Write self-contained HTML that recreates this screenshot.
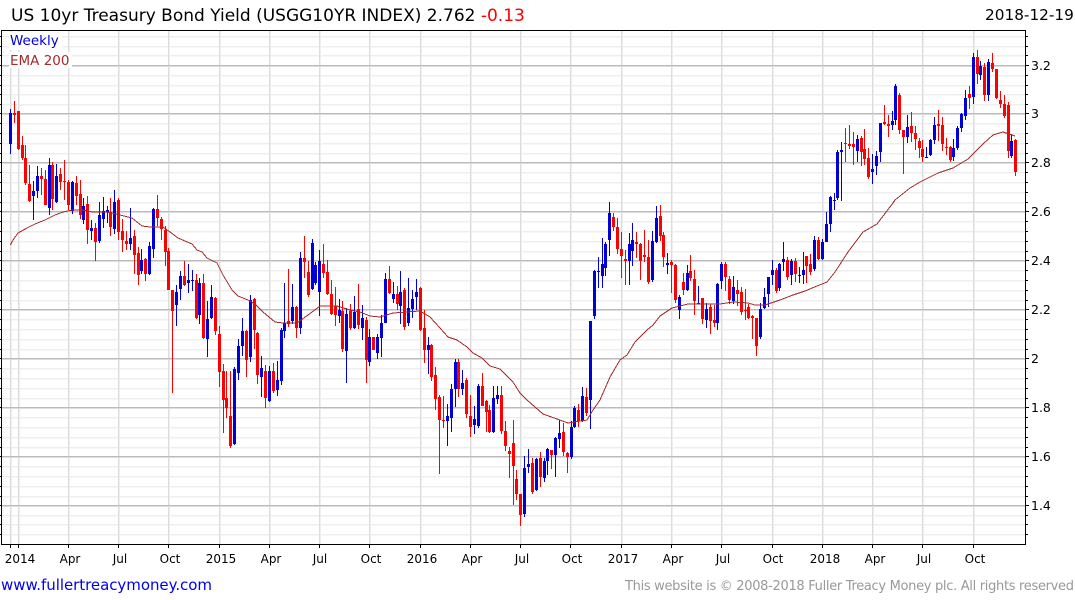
<!DOCTYPE html>
<html><head><meta charset="utf-8"><title>US 10yr Treasury Bond Yield</title>
<style>html,body{margin:0;padding:0;background:#fff;width:1075px;height:600px;overflow:hidden}svg{display:block}text{font-family:"DejaVu Sans",sans-serif}</style></head>
<body>
<svg width="1075" height="600" viewBox="0 0 1075 600" xmlns="http://www.w3.org/2000/svg">
<g shape-rendering="crispEdges" fill="none">
<path transform="translate(0,1)" stroke="#f7f7f7" d="M2 36.5H1025M2 46.5H1025M2 55.5H1025M2 75.5H1025M2 85.5H1025M2 94.5H1025M2 104.5H1025M2 123.5H1025M2 133.5H1025M2 143.5H1025M2 153.5H1025M2 172.5H1025M2 182.5H1025M2 192.5H1025M2 202.5H1025M2 221.5H1025M2 231.5H1025M2 241.5H1025M2 251.5H1025M2 270.5H1025M2 280.5H1025M2 290.5H1025M2 300.5H1025M2 319.5H1025M2 329.5H1025M2 339.5H1025M2 349.5H1025M2 368.5H1025M2 378.5H1025M2 388.5H1025M2 398.5H1025M2 417.5H1025M2 427.5H1025M2 437.5H1025M2 447.5H1025M2 466.5H1025M2 476.5H1025M2 486.5H1025M2 496.5H1025M2 515.5H1025M2 524.5H1025M2 534.5H1025"/>
<path stroke="#eee" d="M2 36.5H1025M2 46.5H1025M2 55.5H1025M2 75.5H1025M2 85.5H1025M2 94.5H1025M2 104.5H1025M2 123.5H1025M2 133.5H1025M2 143.5H1025M2 153.5H1025M2 172.5H1025M2 182.5H1025M2 192.5H1025M2 202.5H1025M2 221.5H1025M2 231.5H1025M2 241.5H1025M2 251.5H1025M2 270.5H1025M2 280.5H1025M2 290.5H1025M2 300.5H1025M2 319.5H1025M2 329.5H1025M2 339.5H1025M2 349.5H1025M2 368.5H1025M2 378.5H1025M2 388.5H1025M2 398.5H1025M2 417.5H1025M2 427.5H1025M2 437.5H1025M2 447.5H1025M2 466.5H1025M2 476.5H1025M2 486.5H1025M2 496.5H1025M2 515.5H1025M2 524.5H1025M2 534.5H1025"/>
<path transform="translate(1,0)" stroke="#eee" d="M10.5 31V544M18.5 31V544M68.5 31V544M118.5 31V544M168.5 31V544M219.5 31V544M269.5 31V544M319.5 31V544M369.5 31V544M420.5 31V544M470.5 31V544M520.5 31V544M570.5 31V544M621.5 31V544M671.5 31V544M721.5 31V544M772.5 31V544M822.5 31V544M872.5 31V544M922.5 31V544M973.5 31V544"/>
<path stroke="#ddd" d="M10.5 31V544M18.5 31V544M68.5 31V544M118.5 31V544M168.5 31V544M219.5 31V544M269.5 31V544M319.5 31V544M369.5 31V544M420.5 31V544M470.5 31V544M520.5 31V544M570.5 31V544M621.5 31V544M671.5 31V544M721.5 31V544M772.5 31V544M822.5 31V544M872.5 31V544M922.5 31V544M973.5 31V544"/>
<path transform="translate(0,1)" stroke="#ddd" d="M2 65.5H1025M2 113.5H1025M2 162.5H1025M2 211.5H1025M2 260.5H1025M2 309.5H1025M2 358.5H1025M2 407.5H1025M2 456.5H1025M2 505.5H1025"/>
<path stroke="#bbb" d="M2 65.5H1025M2 113.5H1025M2 162.5H1025M2 211.5H1025M2 260.5H1025M2 309.5H1025M2 358.5H1025M2 407.5H1025M2 456.5H1025M2 505.5H1025"/>
<rect x="9" y="32" width="53" height="18" fill="#fff"/>
<rect x="9" y="52" width="63" height="16" fill="#fff"/>
<g transform="translate(.5,0)">
<path stroke="#0000d8" stroke-width="1" d="M10 109V154M33 181V220M37 166V198M49 158V215M56 164V203M72 181V214M83 198V224M91 220V240M99 202V243M103 197V228M107 206V223M114 190V234M130 208V250M141 249V274M149 242V275M153 208V258M176 285V326M180 271V300M188 264V293M192 270V291M199 278V324M207 301V357M211 285V319M234 367V445M238 339V380M242 318V356M250 295V362M261 356V397M269 366V402M277 361V396M281 328V385M284 283V338M292 284V324M300 252V334M312 239V290M315 262V285M319 250V316M339 299V323M346 308V383M354 296V329M362 305V340M369 329V366M377 334V359M381 315V357M385 273V323M393 282V303M400 271V324M408 278V326M412 290V318M416 279V310M428 337V374M447 404V446M451 384V432M455 359V407M462 370V395M474 406V434M478 384V428M493 386V433M497 386V404M524 456V517M528 449V473M536 458V491M544 458V482M547 448V475M555 437V477M559 420V448M571 421V459M574 406V428M582 387V422M590 321V429M594 270V319M598 257V288M602 238V288M605 242V276M609 202V256M629 233V285M632 223V266M652 231V282M656 206V243M667 253V274M679 295V319M687 265V291M698 286V304M706 303V328M717 283V330M721 262V289M733 276V304M760 303V339M764 288V309M768 277V307M772 260V285M779 263V291M783 242V271M791 259V285M799 267V283M803 252V284M814 236V271M822 239V260M826 212V242M830 196V232M834 193V210M837 150V200M841 142V201M857 135V162M872 154V184M876 151V175M880 123V162M892 111V130M895 84V125M907 115V143M926 147V158M930 139V156M934 117V144M953 139V161M957 126V150M961 113V132M965 90V120M973 53V104M980 61V80M988 59V101M1011 134V158"/>
<path stroke="#0000d8" stroke-width="3" d="M10 113V144M33 191V196M37 176V191M49 165V208M56 176V202M72 182V211M83 206V220M91 228V231M99 215V241M103 211V219M107 210V212M114 202V229M130 238V244M141 260V271M149 246V274M153 209V249M176 292V305M180 276V289M188 280V283M192 280V281M199 283V315M207 319V339M211 297V318M234 369V444M238 346V373M242 331V346M250 300V357M261 368V377M269 371V401M277 380V390M281 330V381M284 323V331M292 307V321M300 258V328M312 243V289M315 265V283M319 261V292M339 310V316M346 314V351M354 312V328M362 318V328M369 337V362M377 337V353M381 323V338M385 279V323M393 294V299M400 292V306M408 308V323M412 299V309M416 292V297M428 345V350M447 416V421M451 389V418M455 362V389M462 383V389M474 419V425M478 386V426M493 398V432M497 395V399M524 468V514M528 464V467M536 459V490M544 461V478M547 449V461M555 438V455M559 433V439M571 427V457M574 408V427M582 396V421M590 321V400M594 271V316M598 271V272M602 264V276M605 244V268M609 213V240M629 244V261M632 240V251M652 241V280M656 218V242M667 263V265M679 297V310M687 273V290M698 303V304M706 309V320M717 284V323M721 264V281M733 287V301M760 309V337M764 297V308M768 277V294M772 270V275M779 264V288M783 259V262M791 261V275M799 275V276M803 270V275M814 240V269M822 242V259M826 224V242M830 197V224M834 200V201M837 152V198M841 150V152M857 139V151M872 169V172M876 156V166M880 123V152M892 121V125M895 86V120M907 127V137M926 157V158M930 140V155M934 125V140M953 148V157M957 128V148M961 114V128M965 98V116M973 57V97M980 66V75M988 62V95M1011 141V156"/>
<path stroke="#f00" stroke-width="1" d="M14 101V123M18 111V150M22 136V160M25 145V185M29 165V202M41 168V195M45 170V205M52 162V210M60 168V190M64 160V200M68 180V210M76 176V205M80 180V219M87 196V244M95 223V261M110 198V236M118 198V240M122 219V252M126 231V250M134 230V274M138 247V285M145 258V281M157 195V226M161 217V240M165 226V266M168 248V290M172 290V393M184 261V286M196 274V319M203 274V339M215 297V335M219 326V387M223 364V433M226 371V418M230 371V448M246 330V377M254 298V349M257 332V384M265 365V408M273 363V393M288 269V327M296 306V338M304 236V278M308 261V297M323 244V278M327 260V295M331 280V315M335 287V326M342 301V352M350 304V330M358 284V329M366 317V383M373 337V350M389 266V294M397 286V310M404 288V330M420 287V331M424 310V363M431 344V381M435 367V410M439 395V474M443 396V428M458 359V397M466 378V418M470 395V437M482 373V406M486 400V432M489 405V433M501 386V434M505 421V451M509 447V478M513 420V505M516 470V500M520 494V526M532 458V494M540 452V487M551 450V469M563 423V456M567 452V473M578 404V427M586 388V416M613 213V231M617 218V254M621 232V278M625 250V285M636 232V258M640 243V280M644 230V262M648 240V284M660 205V241M663 232V267M671 260V293M675 264V303M683 273V295M690 255V281M694 270V315M702 298V324M710 304V334M714 305V327M725 262V291M729 276V304M737 280V306M741 287V315M745 289V320M748 304V319M752 315V339M756 318V356M776 268V293M787 257V280M795 258V282M806 256V283M810 254V275M818 237V260M845 128V162M849 125V149M853 132V165M861 136V166M864 129V165M868 148V179M884 105V125M888 115V137M899 93V134M903 130V174M911 112V142M915 126V150M919 138V158M922 140V162M938 110V141M942 117V151M946 138V155M950 146V162M969 86V109M977 50V84M984 63V101M992 53V72M996 69V99M1000 91V108M1004 95V118M1008 102V158M1015 139V176"/>
<path stroke="#f00" stroke-width="3" d="M14 113V115M18 111V149M22 145V158M25 158V183M29 184V201M41 176V179M45 179V205M52 165V199M60 174V182M64 181V182M68 182V205M76 183V196M80 194V215M87 204V230M95 228V242M110 212V227M118 200V232M122 231V240M126 241V244M134 236V255M138 253V275M145 259V274M157 209V218M161 219V229M165 230V252M168 251V290M172 290V311M184 276V285M196 280V318M203 283V338M215 298V331M219 334V372M223 371V400M226 398V408M230 416V446M246 331V360M254 299V330M257 333V375M265 371V398M273 371V391M288 321V324M296 307V328M304 258V262M308 272V295M323 264V273M327 272V294M331 294V314M335 306V315M342 311V349M350 311V328M358 309V325M366 320V360M373 337V350M389 279V293M397 294V304M404 290V327M420 288V330M424 328V350M431 345V377M435 375V399M439 397V420M443 420V421M458 362V389M466 380V414M470 416V427M482 386V406M486 401V412M489 410V432M501 395V431M505 431V446M509 451V454M513 443V466M516 479V494M520 494V515M532 463V492M540 458V477M551 450V455M563 432V452M567 453V457M578 410V421M586 397V413M613 217V227M617 227V249M621 249V256M625 259V261M636 242V244M640 244V261M644 255V257M648 257V282M660 216V236M663 235V257M671 262V265M675 265V300M683 282V290M690 271V278M694 279V301M702 298V319M710 307V321M714 320V323M725 264V277M729 279V300M737 290V294M741 292V312M745 310V311M748 307V318M752 316V318M756 318V346M776 270V291M787 260V277M795 261V274M806 256V266M810 264V272M818 240V259M845 143V144M849 144V146M853 144V147M861 138V152M864 149V159M868 158V177M884 122V124M888 124V126M899 95V130M903 130V137M911 126V133M915 133V139M919 141V148M922 149V157M938 124V126M942 125V144M946 147V148M950 147V160M969 94V98M977 57V74M984 67V95M992 63V69M996 69V98M1000 100V104M1004 104V116M1008 105V151M1015 140V172"/>
</g>
</g>
<path shape-rendering="crispEdges" fill="none" stroke="#a52a2a" stroke-width="1" d="M10.3 245L13 240L18 233L27 228L35 224L45 220L55 215L63 212L72 210L82 210L93 212L107 212L120 215L132 218L142 226L150 227L163 227L170 232L178 238L192 244L197 250L202 252L207 258L217 263L223 275L232 290L238 296L248 300L255 304L263 312L275 322L283 323L297 323L308 315L320 306L337 306L350 310L360 312L370 316L380 317L393 313L420 311L430 317L440 328L448 337L457 340L467 347L473 353L482 358L490 366L500 369L513 382L520 393L527 400L543 414L557 419L568 423L587 420L593 410L600 400L610 377L620 360L627 355L635 342L647 330L653 325L660 316L672 308L688 304L703 304L720 304L733 302L748 303L755 305L765 305L780 300L793 295L805 291L817 286L827 282L835 272L848 252L863 232L877 224L893 203L895 200L910 188L920 182L938 173L953 168L968 159L983 144L993 135L1003 132L1015 136"/>
<g shape-rendering="crispEdges" fill="none" stroke="#000">
<path stroke-width="1.4" d="M1.5 30.5H1025.5V544.5H1.5z"/>
<path d="M0 36.5H2M0 46.5H2M0 55.5H2M0 65.5H2M0 75.5H2M0 85.5H2M0 94.5H2M0 104.5H2M0 113.5H2M0 123.5H2M0 133.5H2M0 143.5H2M0 153.5H2M0 162.5H2M0 172.5H2M0 182.5H2M0 192.5H2M0 202.5H2M0 211.5H2M0 221.5H2M0 231.5H2M0 241.5H2M0 251.5H2M0 260.5H2M0 270.5H2M0 280.5H2M0 290.5H2M0 300.5H2M0 309.5H2M0 319.5H2M0 329.5H2M0 339.5H2M0 349.5H2M0 358.5H2M0 368.5H2M0 378.5H2M0 388.5H2M0 398.5H2M0 407.5H2M0 417.5H2M0 427.5H2M0 437.5H2M0 447.5H2M0 456.5H2M0 466.5H2M0 476.5H2M0 486.5H2M0 496.5H2M0 505.5H2M0 515.5H2M0 524.5H2M0 534.5H2"/>
<path d="M1026 65.5H1029M1026 113.5H1029M1026 162.5H1029M1026 211.5H1029M1026 260.5H1029M1026 309.5H1029M1026 358.5H1029M1026 407.5H1029M1026 456.5H1029M1026 505.5H1029M1026 36.5H1028M1026 46.5H1028M1026 55.5H1028M1026 75.5H1028M1026 85.5H1028M1026 94.5H1028M1026 104.5H1028M1026 123.5H1028M1026 133.5H1028M1026 143.5H1028M1026 153.5H1028M1026 172.5H1028M1026 182.5H1028M1026 192.5H1028M1026 202.5H1028M1026 221.5H1028M1026 231.5H1028M1026 241.5H1028M1026 251.5H1028M1026 270.5H1028M1026 280.5H1028M1026 290.5H1028M1026 300.5H1028M1026 319.5H1028M1026 329.5H1028M1026 339.5H1028M1026 349.5H1028M1026 368.5H1028M1026 378.5H1028M1026 388.5H1028M1026 398.5H1028M1026 417.5H1028M1026 427.5H1028M1026 437.5H1028M1026 447.5H1028M1026 466.5H1028M1026 476.5H1028M1026 486.5H1028M1026 496.5H1028M1026 515.5H1028M1026 524.5H1028M1026 534.5H1028"/>
<path d="M10.5 545V548M18.5 545V548M68.5 545V548M118.5 545V548M168.5 545V548M219.5 545V548M269.5 545V548M319.5 545V548M369.5 545V548M420.5 545V548M470.5 545V548M520.5 545V548M570.5 545V548M621.5 545V548M671.5 545V548M721.5 545V548M772.5 545V548M822.5 545V548M872.5 545V548M922.5 545V548M973.5 545V548"/>
</g>
<text x="11" y="21" font-size="17" fill="#000">US 10yr Treasury Bond Yield (USGG10YR INDEX) 2.762 <tspan fill="#f00">-0.13</tspan></text>
<text x="985" y="20" font-size="15.3" fill="#000">2018-12-19</text>
<text x="10" y="45" font-size="13.5" fill="#0000d8">Weekly</text>
<text x="10" y="65" font-size="13.5" fill="#a52a2a">EMA 200</text>
<g font-size="12.5" fill="#000">
<text x="1031" y="70">3.2</text><text x="1031" y="118">3</text><text x="1031" y="167">2.8</text><text x="1031" y="216">2.6</text><text x="1031" y="265">2.4</text><text x="1031" y="314">2.2</text><text x="1031" y="363">2</text><text x="1031" y="412">1.8</text><text x="1031" y="461">1.6</text><text x="1031" y="510">1.4</text>
</g>
<g font-size="12" fill="#000" text-anchor="middle">
<text x="20" y="563">2014</text><text x="70" y="563">Apr</text><text x="120" y="563">Jul</text><text x="170" y="563">Oct</text><text x="221" y="563">2015</text><text x="271" y="563">Apr</text><text x="320" y="563">Jul</text><text x="371" y="563">Oct</text><text x="422" y="563">2016</text><text x="472" y="563">Apr</text><text x="522" y="563">Jul</text><text x="572" y="563">Oct</text><text x="623" y="563">2017</text><text x="673" y="563">Apr</text><text x="723" y="563">Jul</text><text x="773" y="563">Oct</text><text x="825" y="563">2018</text><text x="875" y="563">Apr</text><text x="924" y="563">Jul</text><text x="975" y="563">Oct</text>
</g>
<text x="1" y="590" font-size="15" fill="#0000ee" textLength="211">www.fullertreacymoney.com</text>
<text x="625" y="590" font-size="13" fill="#999" textLength="449">This website is © 2008-2018 Fuller Treacy Money plc. All rights reserved</text>
</svg>
</body></html>
